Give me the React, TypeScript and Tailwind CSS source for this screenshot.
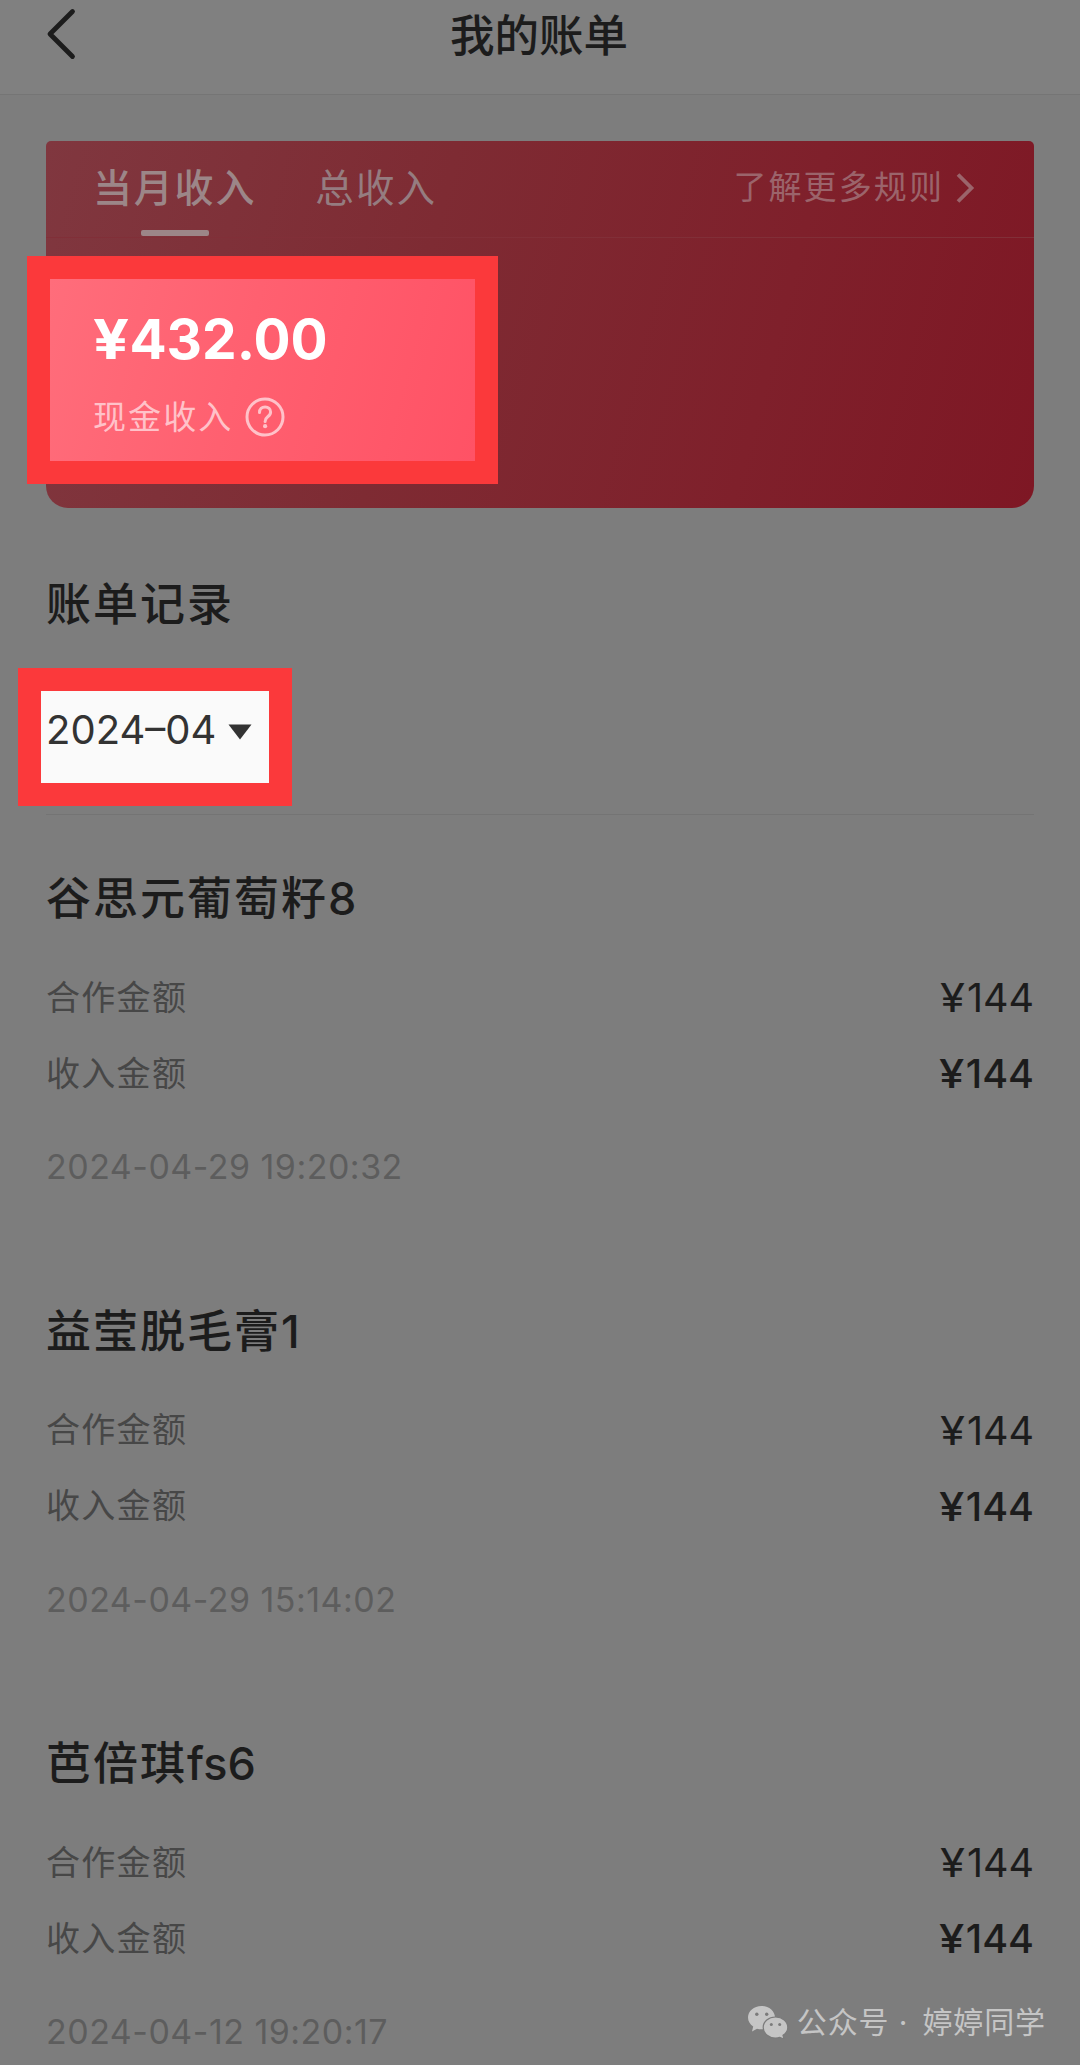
import type { ReactNode } from 'react'

type Bill = {
  name: string
  code: string
  cooperation: string
  income: string
  time: string
}

const bills: Bill[] = [
  { name: '谷思元葡萄籽', code: '8', cooperation: '144', income: '144', time: '2024-04-29 19:20:32' },
  { name: '益莹脱毛膏', code: '1', cooperation: '144', income: '144', time: '2024-04-29 15:14:02' },
  { name: '芭倍琪', code: 'fs6', cooperation: '144', income: '144', time: '2024-04-12 19:20:17' },
]

function Header() {
  return (
    <header className="flex h-[95px] items-start border-b border-[#757575] bg-[#808080]">
      <button type="button" aria-label="返回" className="ml-11 mt-2 w-[120px]">
        <svg width="34" height="52" viewBox="0 0 34 52" fill="none">
          <path
            d="M28.5 3.5 6 26l22.5 22.5"
            stroke="#1c1c1c"
            strokeWidth="4.8"
            strokeLinecap="round"
            strokeLinejoin="round"
          />
        </svg>
      </button>
      <h1 className="mr-[166px] mt-[5px] flex-1 text-center text-[44.5px] font-medium leading-[62px]">
        我的账单
      </h1>
    </header>
  )
}

// wide yen sign in front of every amount
function Yen() {
  return <span className="mr-[5px] inline-block origin-left scale-x-[1.15]">¥</span>
}

function IncomeCard() {
  return (
    <section className="mx-[46px] mt-[46px] h-[367px] rounded-t-[5px] rounded-b-[22px] bg-[linear-gradient(105deg,#80373f_0%,#7e2b33_38%,#7f202b_72%,#7e1724_100%)]">
      <div className="flex h-[97px] items-start justify-between border-b border-[#812f38] pl-[47px] pr-[58px]">
        <div className="flex gap-[59px] whitespace-nowrap leading-[48px]">
          <div className="flex flex-col items-center pt-[23px]">
            <span className="text-[39px] font-medium tracking-[1.8px] text-[#9c8688]">当月收入</span>
            <span className="mt-[18px] h-1.5 w-[68px] rounded-[2px] bg-[#9c8688]" />
          </div>
          <span className="pt-[23px] text-[38.5px] tracking-[2.2px] text-[#957c80]">总收入</span>
        </div>
        <div className="flex items-center gap-3 pt-[22px] text-[#9b646b]">
          <span className="text-[33px] leading-[48px] tracking-[2.1px]">了解更多规则</span>
          <svg width="20" height="32" viewBox="0 0 20 32" fill="none" className="mt-0.5">
            <path d="M2 2.5 15.5 16 2 29.5" stroke="currentColor" strokeWidth="3.8" />
          </svg>
        </div>
      </div>

      <div className="-ml-[19px] mt-[18px] h-[228px] w-[471px] border-[23px] border-[#fb393b] bg-[linear-gradient(105deg,#ff6d7b_0%,#ff6070_45%,#ff5265_100%)] pl-[43px] pt-[32px] text-white">
        <p className="text-[55px] font-bold leading-[56px]">
          <Yen />
          432.00
        </p>
        <div className="mt-[26px] flex items-center gap-3 text-[#ffc2c9]">
          <span className="text-[33px] leading-[48px] tracking-[2.1px]">现金收入</span>
          <svg width="40" height="40" viewBox="0 0 40 40" fill="none">
            <circle cx="20" cy="20" r="18" stroke="currentColor" strokeWidth="3" />
            <path
              d="M14.5 15.5c0-3.4 2.4-5.6 5.6-5.6s5.5 2.1 5.5 5c0 2.3-1.3 3.6-2.9 4.8-1.7 1.3-2.6 2.2-2.6 4.7"
              stroke="currentColor"
              strokeWidth="3"
              strokeLinecap="round"
            />
            <circle cx="20.1" cy="29.2" r="2.1" fill="currentColor" />
          </svg>
        </div>
      </div>
    </section>
  )
}

function MonthPicker() {
  return (
    <button
      type="button"
      className="ml-[18px] mt-[31px] flex h-[138px] w-[274px] items-start border-[23px] border-[#fb393b] bg-[#fafafa] pl-[5px] pt-[15px] text-[#333333]"
    >
      <span className="text-[40px] leading-[48px]">2024–04</span>
      <svg width="24" height="16" viewBox="0 0 24 16" className="ml-3 mt-[18px]">
        <path d="M0.5 0.5h23L12 15.5z" fill="currentColor" />
      </svg>
    </button>
  )
}

function AmountRow({ label, children }: { label: string; children: ReactNode }) {
  return (
    <div className="flex h-[76px] items-center justify-between">
      <span className="text-[34px] tracking-[1.3px] text-[#474747]">{label}</span>
      {children}
    </div>
  )
}

function BillItem({ bill }: { bill: Bill }) {
  return (
    <li className="h-[432.5px] pt-[52px]">
      <h3 className="text-[45px] font-medium leading-[64px]">
        <span className="tracking-[2px]">{bill.name}</span>
        {bill.code}
      </h3>
      <div className="mt-7">
        <AmountRow label="合作金额">
          <span className="pt-1 text-[39.5px]">
            <Yen />
            {bill.cooperation}
          </span>
        </AmountRow>
        <AmountRow label="收入金额">
          <span className="pt-1 text-[39.5px] font-medium">
            <Yen />
            {bill.income}
          </span>
        </AmountRow>
      </div>
      <time className="mt-[32px] block text-[34px] leading-[48px] tracking-[0.48px] text-[#5d5d5d]">
        {bill.time}
      </time>
    </li>
  )
}

function Watermark() {
  return (
    <div className="absolute bottom-[19px] right-[34px] flex h-12 items-center text-[#c5c5c5]">
      <svg width="42" height="34" viewBox="0 0 42 34" className="mr-2">
        <path
          d="M14.5 1C6.8 1 1 6.2 1 12.6c0 3.7 2 6.9 5.2 9L5 26.5l5-2.8c1.4.4 2.9.6 4.5.6 7.7 0 13.5-5.2 13.5-11.7S22.2 1 14.5 1z"
          fill="currentColor"
        />
        <path
          d="M28.5 12c-6.9 0-12.3 4.6-12.3 10.5S21.6 33 28.5 33c1.5 0 2.9-.2 4.2-.6l4.3 1.6-1-3.7c3-1.9 4.8-4.7 4.8-7.8C40.8 16.6 35.4 12 28.5 12z"
          fill="currentColor"
          stroke="#7b7b7b"
          strokeWidth="1.2"
        />
        <g fill="#7b7b7b">
          <circle cx="9.8" cy="9.3" r="1.7" />
          <circle cx="19.7" cy="9.3" r="1.7" />
          <circle cx="24.3" cy="19.4" r="1.5" />
          <circle cx="32.7" cy="19.4" r="1.5" />
        </g>
      </svg>
      <span className="mr-[14px] whitespace-pre text-[30px] leading-[48px] tracking-[0.9px]">公众号 ·</span>
      <span className="text-[30px] leading-[48px] tracking-[0.9px]">婷婷同学</span>
    </div>
  )
}

export default function App() {
  return (
    <main
      lang="zh-CN"
      className="relative h-[2065px] w-[1080px] overflow-hidden bg-[#7d7d7d] font-['Inter','Noto_Sans_CJK_SC',sans-serif] text-[#1c1c1c]"
    >
      <Header />
      <IncomeCard />
      <h2 className="ml-[46px] mt-[65px] text-[45px] font-medium leading-[64px] tracking-[2px]">账单记录</h2>
      <MonthPicker />
      <ul className="mx-[46px] mt-2 border-t border-[#747474]">
        {bills.map((bill) => (
          <BillItem key={bill.time} bill={bill} />
        ))}
      </ul>
      <Watermark />
    </main>
  )
}
